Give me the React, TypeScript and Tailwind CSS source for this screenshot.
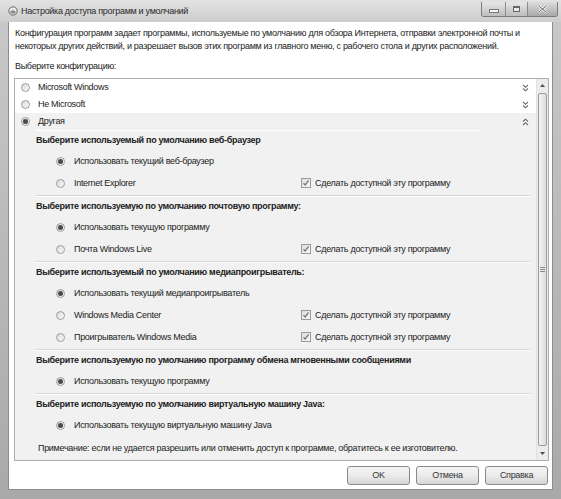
import React from "react";

const Radio = ({ checked }: { checked?: boolean }) => (
  <span className="w-[9px] h-[9px] shrink-0 rounded-full border border-[#9d9d9d] bg-linear-to-br from-[#d9d9d9] to-[#fafafa] flex items-center justify-center">
    {checked && <span className="w-[5px] h-[5px] rounded-full bg-[#4a4a4a]" />}
  </span>
);

const Check = () => (
  <span className="w-[10px] h-[10px] shrink-0 border border-[#9a9a9a] bg-linear-to-br from-[#dedede] to-[#f8f8f8] flex items-center justify-center">
    <svg width="8" height="8" viewBox="0 0 8 8">
      <path d="M1.5 4.2 L3.2 6 L6.5 1.5" fill="none" stroke="#7a7a7a" strokeWidth="1.3" />
    </svg>
  </span>
);

const Chevrons = ({ up }: { up?: boolean }) => (
  <svg width="7" height="8" viewBox="0 0 7 8" className={up ? "rotate-180" : ""}>
    <path d="M1 1 L3.5 3.3 L6 1 M1 4.5 L3.5 6.8 L6 4.5" fill="none" stroke="#6a6a6a" strokeWidth="1.1" />
  </svg>
);

const TopRow = ({ label, checked, up, gray }: { label: string; checked?: boolean; up?: boolean; gray?: boolean }) => (
  <div className={`h-[17px] flex items-center pl-[6px] pr-[7px] ${gray ? "bg-[#f1f1f1]" : ""}`}>
    <Radio checked={checked} />
    <span className="ml-[8px] flex-1">{label}</span>
    <Chevrons up={up} />
  </div>
);

const Item = ({ label, checked, check }: { label: string; checked?: boolean; check?: boolean }) => (
  <div className="h-[22px] flex items-center pl-[41px]">
    <Radio checked={checked} />
    <span className="ml-[9px] w-[227px]">{label}</span>
    {check && (
      <span className="flex items-center">
        <Check />
        <span className="ml-[4px]">Сделать доступной эту программу</span>
      </span>
    )}
  </div>
);

const Section = ({ title, children, sep = true }: { title: string; children: React.ReactNode; sep?: boolean }) => (
  <div className="pt-[1px]">
    <div className="h-[16px] flex items-center pl-[21px] font-bold">{title}</div>
    <div className="mt-[2px]">{children}</div>
    {sep && (
      <div className="mt-[1px] ml-[21px] mr-[6px] border-t border-[#d6d6d6] border-b border-b-white h-[2px]" />
    )}
  </div>
);

export default function App() {
  return (
    <div className="w-[561px] h-[499px] flex flex-col bg-linear-to-b from-[#c9c9c9] to-[#a9a9a9] text-[9px] leading-[13px] tracking-[-0.3px] text-[#222] font-['Liberation_Sans',Arial,sans-serif] overflow-hidden whitespace-nowrap">
      {/* Title bar */}
      <div className="h-[22px] shrink-0 flex items-center pl-[8px] pr-[3px] bg-linear-to-b from-[#e2e2e2] to-[#cdcdcd]">
        <svg width="10" height="10" viewBox="0 0 10 10">
          <circle cx="5" cy="5" r="4.3" fill="#bdbdbd" stroke="#6f6f6f" strokeWidth="0.8" />
          <path d="M2.5 5 A2.5 2.5 0 0 1 7.5 5" fill="none" stroke="#ffffff" strokeWidth="1.2" />
          <path d="M3 6 L7 6" stroke="#555" strokeWidth="1" />
        </svg>
        <span className="ml-[3px] text-[#2a2a2a]">Настройка доступа программ и умолчаний</span>
        <div className="flex-1" />
        <div className="self-start mt-[2px] flex h-[15px] rounded-b-[3px] border border-t-0 border-[#7c7c7c] overflow-hidden">
          <div className="w-[24px] flex items-center justify-center bg-linear-to-b from-[#e8e8e8] to-[#bdbdbd] border-r border-[#8a8a8a]">
            <span className="w-[8px] h-[2px] bg-[#f4f4f4] border border-[#777] box-content mt-[4px]" />
          </div>
          <div className="w-[22px] flex items-center justify-center bg-linear-to-b from-[#e8e8e8] to-[#bdbdbd] border-r border-[#8a8a8a]">
            <span className="w-[7px] h-[6px] border border-[#666] border-t-2 bg-[#eaeaea]" />
          </div>
          <div className="w-[29px] flex items-center justify-center bg-linear-to-b from-[#dcdcdc] to-[#a9a9a9]">
            <svg width="9" height="8" viewBox="0 0 9 8">
              <path d="M1 1 L8 7 M8 1 L1 7" stroke="#f8f8f8" strokeWidth="2.4" />
              <path d="M1 1 L8 7 M8 1 L1 7" stroke="#5a5a5a" strokeWidth="1" />
            </svg>
          </div>
        </div>
      </div>

      {/* Client */}
      <div className="flex-1 mx-[8px] mb-[9px] bg-white flex flex-col border-x border-b border-[#8d8d8d]">
        <div className="pt-[5px] pl-[6px] pr-[6px] flex flex-col">
          <div className="h-[13px]">
            Конфигурация программ задает программы, используемые по умолчанию для обзора Интернета, отправки электронной почты и
          </div>
          <div className="h-[13px]">
            некоторых других действий, и разрешает вызов этих программ из главного меню, с рабочего стола и других расположений.
          </div>
        </div>
        <div className="mt-[7px] pl-[6px] h-[13px]">Выберите конфигурацию:</div>

        <div className="mt-[5px] ml-[5px] w-[535px] h-[383px] border border-[#adadad] flex overflow-hidden">
          <div className="flex-1 flex flex-col overflow-hidden">
            <TopRow label="Microsoft Windows" />
            <TopRow label="Не Microsoft" />
            <div className="flex-1 bg-[#f1f1f1] flex flex-col">
              <TopRow label="Другая" checked up gray />
              <div className="ml-[21px] mr-[56px] border-t border-white" />
              <Section title="Выберите используемый по умолчанию веб-браузер">
                <Item label="Использовать текущий веб-браузер" checked />
                <Item label="Internet Explorer" check />
              </Section>
              <Section title="Выберите используемую по умолчанию почтовую программу:">
                <Item label="Использовать текущую программу" checked />
                <Item label="Почта Windows Live" check />
              </Section>
              <Section title="Выберите используемый по умолчанию медиапроигрыватель:">
                <Item label="Использовать текущий медиапроигрыватель" checked />
                <Item label="Windows Media Center" check />
                <Item label="Проигрыватель Windows Media" check />
              </Section>
              <Section title="Выберите используемую по умолчанию программу обмена мгновенными сообщениями">
                <Item label="Использовать текущую программу" checked />
              </Section>
              <Section title="Выберите используемую по умолчанию виртуальную машину Java:" sep={false}>
                <Item label="Использовать текущую виртуальную машину Java" checked />
              </Section>
              <div className="mt-[4px] h-[16px] flex items-center pl-[23px]">
                Примечание: если не удается разрешить или отменить доступ к программе, обратитесь к ее изготовителю.
              </div>
            </div>
          </div>
          {/* Scrollbar */}
          <div className="w-[12px] shrink-0 bg-[#ececec] border-l border-[#e2e2e2] flex flex-col">
            <div className="h-[13px] flex items-center justify-center">
              <svg width="5" height="3" viewBox="0 0 5 3"><path d="M0 3 L2.5 0 L5 3 Z" fill="#4e4e4e" /></svg>
            </div>
            <div className="flex-1 mx-[1px] my-[1px] rounded-[2px] border border-[#9c9c9c] bg-linear-to-r from-[#f4f4f4] to-[#dcdcdc] flex items-center justify-center">
              <div className="flex flex-col gap-[1px]">
                <span className="w-[5px] h-[1px] bg-[#8a8a8a]" />
                <span className="w-[5px] h-[1px] bg-[#8a8a8a]" />
                <span className="w-[5px] h-[1px] bg-[#8a8a8a]" />
              </div>
            </div>
            <div className="h-[13px] flex items-center justify-center">
              <svg width="5" height="3" viewBox="0 0 5 3"><path d="M0 0 L2.5 3 L5 0 Z" fill="#4e4e4e" /></svg>
            </div>
          </div>
        </div>

        <div className="mt-[5px] flex justify-end gap-[6px] pr-[4px]">
          {["OK", "Отмена", "Справка"].map((t) => (
            <div
              key={t}
              className="w-[63px] h-[19px] rounded-[3px] border border-[#8a8a8a] bg-linear-to-b from-[#f5f5f5] via-[#ebebeb] to-[#d6d6d6] flex items-center justify-center text-[#333]"
            >
              {t}
            </div>
          ))}
        </div>
      </div>
    </div>
  );
}
